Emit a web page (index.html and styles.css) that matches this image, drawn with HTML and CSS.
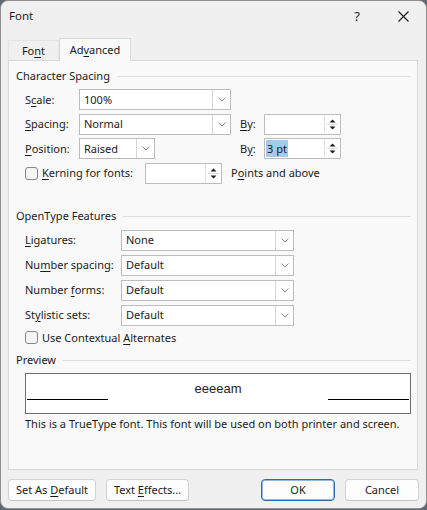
FILE: index.html
```html
<!DOCTYPE html>
<html>
<head>
<meta charset="utf-8">
<link rel="stylesheet" href="styles.css">
</head>
<body>
<div class="window">
  <div class="titlebar">
    <span class="title">Font</span>
    <span class="capbtn help">?</span>
    <span class="capbtn close"><svg width="11" height="11" viewBox="0 0 11 11"><path d="M0.5 0.5 L10.5 10.5 M10.5 0.5 L0.5 10.5" stroke="#1a1a1a" stroke-width="1.1" fill="none"/></svg></span>
  </div>
  <div class="tabs">
    <div class="tab">Fo<u>n</u>t</div>
    <div class="tab active">Ad<u>v</u>anced</div>
  </div>
  <div class="panel">
    <div class="gtitle"><span>Character Spacing</span><span class="rule"></span></div>
    <div class="rows1">
      <div class="row">
        <span class="lbl l1">S<u>c</u>ale:</span>
        <div class="combo c-wide"><span class="val">100%</span><span class="drop"><svg width="8" height="5" viewBox="0 0 8 5"><path d="M0.5 0.5 L4 4 L7.5 0.5" stroke="#8a8a8a" fill="none"/></svg></span></div>
      </div>
      <div class="row">
        <span class="lbl l1"><u>S</u>pacing:</span>
        <div class="combo c-wide"><span class="val">Normal</span><span class="drop"><svg width="8" height="5" viewBox="0 0 8 5"><path d="M0.5 0.5 L4 4 L7.5 0.5" stroke="#8a8a8a" fill="none"/></svg></span></div>
        <span class="lbl by by1"><u>B</u>y:</span>
        <div class="spin"><span class="val"></span><span class="arrows"><svg width="15" height="19" viewBox="0 0 15 19"><path d="M4.5 7.5 L7.5 4.5 L10.5 7.5 Z" fill="#1a1a1a"/><path d="M2 9.5 H13" stroke="#dcdcdc"/><path d="M4.5 11.5 L10.5 11.5 L7.5 14.5 Z" fill="#1a1a1a"/></svg></span></div>
      </div>
      <div class="row">
        <span class="lbl l1"><u>P</u>osition:</span>
        <div class="combo c-short"><span class="val">Raised</span><span class="drop"><svg width="8" height="5" viewBox="0 0 8 5"><path d="M0.5 0.5 L4 4 L7.5 0.5" stroke="#8a8a8a" fill="none"/></svg></span></div>
        <span class="lbl by by2">B<u>y</u>:</span>
        <div class="spin"><span class="val"><span class="sel">3 pt</span></span><span class="arrows"><svg width="15" height="19" viewBox="0 0 15 19"><path d="M4.5 7.5 L7.5 4.5 L10.5 7.5 Z" fill="#1a1a1a"/><path d="M2 9.5 H13" stroke="#dcdcdc"/><path d="M4.5 11.5 L10.5 11.5 L7.5 14.5 Z" fill="#1a1a1a"/></svg></span></div>
      </div>
      <div class="row">
        <span class="check"></span>
        <span class="lbl kern"><u>K</u>erning for fonts:</span>
        <div class="spin"><span class="val"></span><span class="arrows"><svg width="15" height="19" viewBox="0 0 15 19"><path d="M4.5 7.5 L7.5 4.5 L10.5 7.5 Z" fill="#1a1a1a"/><path d="M2 9.5 H13" stroke="#dcdcdc"/><path d="M4.5 11.5 L10.5 11.5 L7.5 14.5 Z" fill="#1a1a1a"/></svg></span></div>
        <span class="lbl pts">P<u>o</u>ints and above</span>
      </div>
    </div>

    <div class="gtitle g2"><span>OpenType Features</span><span class="rule"></span></div>
    <div class="rows2">
      <div class="row">
        <span class="lbl l2"><u>L</u>igatures:</span>
        <div class="combo c-ot"><span class="val">None</span><span class="drop"><svg width="8" height="5" viewBox="0 0 8 5"><path d="M0.5 0.5 L4 4 L7.5 0.5" stroke="#8a8a8a" fill="none"/></svg></span></div>
      </div>
      <div class="row">
        <span class="lbl l2">Nu<u>m</u>ber spacing:</span>
        <div class="combo c-ot"><span class="val">Default</span><span class="drop"><svg width="8" height="5" viewBox="0 0 8 5"><path d="M0.5 0.5 L4 4 L7.5 0.5" stroke="#8a8a8a" fill="none"/></svg></span></div>
      </div>
      <div class="row">
        <span class="lbl l2">Number <u>f</u>orms:</span>
        <div class="combo c-ot"><span class="val">Default</span><span class="drop"><svg width="8" height="5" viewBox="0 0 8 5"><path d="M0.5 0.5 L4 4 L7.5 0.5" stroke="#8a8a8a" fill="none"/></svg></span></div>
      </div>
      <div class="row">
        <span class="lbl l2">St<u>y</u>listic sets:</span>
        <div class="combo c-ot"><span class="val">Default</span><span class="drop"><svg width="8" height="5" viewBox="0 0 8 5"><path d="M0.5 0.5 L4 4 L7.5 0.5" stroke="#8a8a8a" fill="none"/></svg></span></div>
      </div>
      <div class="crow">
        <span class="check"></span>
        <span class="lbl">Use Contextual <u>A</u>lternates</span>
      </div>
    </div>

    <div class="gtitle g3"><span>Preview</span><span class="rule"></span></div>
    <div class="preview">
      <span class="uline"></span>
      <span class="sample">eeeeam</span>
      <span class="uline"></span>
    </div>
    <div class="note">This is a TrueType font. This font will be used on both printer and screen.</div>
  </div>
  <div class="buttons">
    <div class="bgroup">
      <span class="btn b-def"><span>Set As <u>D</u>efault</span></span>
      <span class="btn b-fx"><span>Text <u>E</u>ffects...</span></span>
    </div>
    <div class="bgroup">
      <span class="btn b-ok"><span>OK</span></span>
      <span class="btn b-cancel"><span>Cancel</span></span>
    </div>
  </div>
</div>
</body>
</html>
```

FILE: styles.css
```css
html, body {
  margin: 0;
  padding: 0;
}
body {
  background: #5e6872;
  font-family: "Noto Sans", "Open Sans", sans-serif;
  font-size: 11px;
  color: #1b1b1b;
  line-height: 16px;
}
u {
  text-decoration-thickness: 1px;
  text-underline-offset: 2px;
}
.window {
  width: 427px;
  height: 509px;
  box-sizing: border-box;
  background: #f0f0f0;
  border: 1px solid #8e8e8e;
  border-radius: 8px;
  display: flex;
  flex-direction: column;
  overflow: hidden;
}
.titlebar {
  height: 30px;
  display: flex;
  align-items: center;
  padding-left: 8px;
}
.title {
  flex: 1;
  font-size: 11.5px;
}
.capbtn {
  width: 46px;
  height: 30px;
  display: flex;
  align-items: center;
  justify-content: center;
}
.help {
  font-size: 13px;
}
.tabs {
  height: 29px;
  display: flex;
  align-items: flex-end;
  padding-left: 7px;
}
.tab {
  box-sizing: border-box;
  height: 20px;
  width: 51px;
  line-height: 19px;
  text-align: center;
  border: 1px solid #e4e4e4;
  border-bottom: none;
}
.tab.active {
  width: 72px;
  height: 23px;
  line-height: 21px;
  background: #f9f9f9;
  border-color: #d9d9d9;
  margin-bottom: -1px;
  position: relative;
  z-index: 1;
}
.panel {
  box-sizing: border-box;
  margin-left: 7px;
  width: 410px;
  height: 410px;
  background: #f9f9f9;
  border: 1px solid #d9d9d9;
  padding: 7px 6px 0 7px;
}
.gtitle {
  display: flex;
  align-items: center;
  height: 16px;
}
.rule {
  flex: 1;
  height: 1px;
  background: #dfdfdf;
  margin-left: 7px;
}
.g2 { margin-top: 24.5px; }
.g3 { margin-top: 6.5px; }
.rows1 {
  margin-top: 5px;
  padding-left: 9px;
}
.rows1 .row {
  margin-bottom: 3.5px;
}
.rows2 {
  margin-top: 5.5px;
  padding-left: 9px;
}
.rows2 .row {
  margin-bottom: 4px;
}
.row {
  display: flex;
  align-items: center;
  height: 21px;
}
.lbl {
  white-space: nowrap;
}
.l1 { width: 54px; }
.l2 { width: 96px; }
.by { width: 24px; }
.by1 { margin-left: 9px; }
.by2 { margin-left: 85px; }
.kern { width: 103px; margin-left: 4px; }
.pts { margin-left: 9px; }
.combo, .spin {
  box-sizing: border-box;
  height: 21px;
  background: #ffffff;
  border: 1px solid #bdbdbd;
  display: flex;
  align-items: stretch;
}
.c-wide { width: 152px; }
.c-short { width: 76px; }
.c-ot { width: 173px; }
.spin { width: 77px; }
.val {
  flex: 1;
  display: flex;
  align-items: center;
  padding-left: 4px;
  overflow: hidden;
}
.spin .val {
  padding-left: 1px;
  padding-top: 1px;
  padding-bottom: 1px;
}
.sel {
  background: #a3cbf0;
  height: 100%;
  display: flex;
  align-items: center;
  padding: 0 1px;
}
.drop {
  width: 17px;
  border-left: 1px solid #d6d6d6;
  display: flex;
  align-items: center;
  justify-content: center;
}
.arrows {
  width: 15px;
  border-left: 1px solid #e2e2e2;
  display: flex;
  align-items: center;
  justify-content: center;
}
.check {
  box-sizing: border-box;
  width: 13px;
  height: 13px;
  border: 1px solid #878787;
  border-radius: 3px;
  background: #f5f5f5;
  flex: none;
}
.crow {
  display: flex;
  align-items: center;
  height: 16px;
}
.crow .lbl { margin-left: 4px; }
.preview {
  box-sizing: border-box;
  margin-top: 5px;
  margin-left: 9px;
  width: 386px;
  height: 41px;
  background: #ffffff;
  border: 1px solid #6f6f6f;
  display: flex;
  align-items: flex-start;
  padding: 0 1px;
}
.uline {
  width: 81px;
  height: 1px;
  background: #000000;
  margin-top: 25px;
}
.sample {
  flex: 1;
  text-align: center;
  font-family: "Liberation Sans", Arial, sans-serif;
  font-size: 13px;
  line-height: 15px;
  color: #222;
  padding-top: 7px;
}
.note {
  margin-top: 2px;
  margin-left: 9px;
  white-space: nowrap;
}
.buttons {
  margin-top: 9px;
  height: 22px;
  display: flex;
  justify-content: space-between;
  padding: 0 7px;
}
.bgroup {
  display: flex;
  gap: 10px;
}
.btn {
  box-sizing: border-box;
  height: 22px;
  display: flex;
  align-items: center;
  justify-content: center;
  background: #fdfdfd;
  border: 1px solid #d3d3d3;
  border-bottom-color: #c2c2c2;
  border-radius: 4px;
}
.b-def { width: 88px; }
.b-fx { width: 83px; }
.b-ok {
  width: 74px;
  border: 1px solid #2d6bb3;
  box-shadow: inset 0 0 0 1px #94b8df;
}
.b-cancel { width: 74px; }
```
